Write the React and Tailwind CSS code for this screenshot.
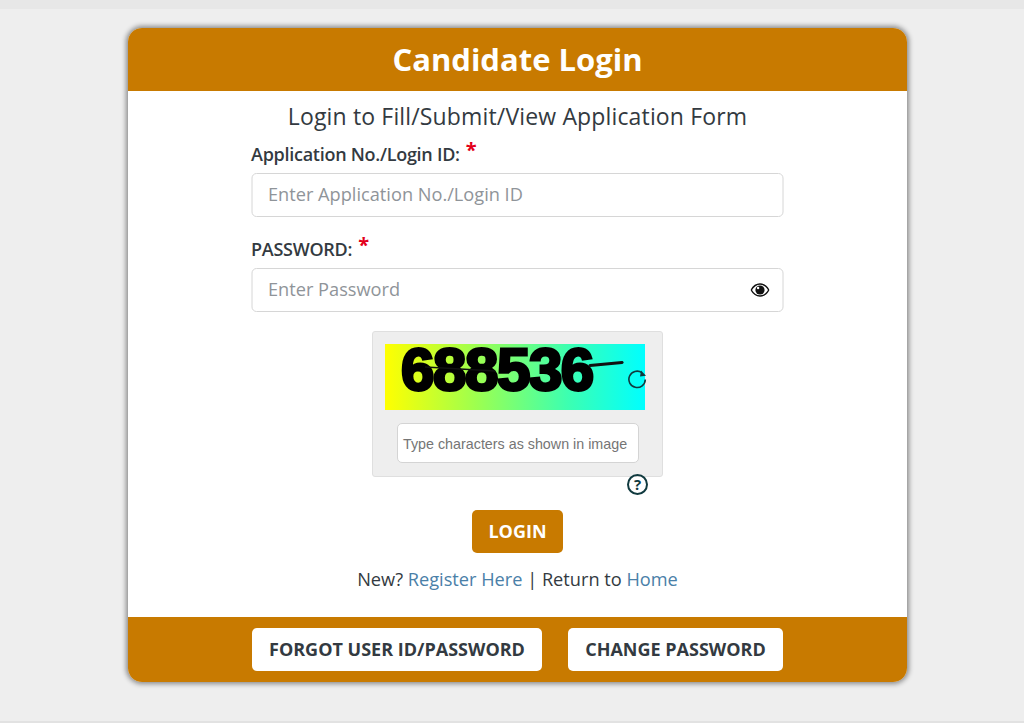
import React from 'react';

const Label = ({ children, className }) => (
  <label className={`flex items-start h-[24px] text-[18px] leading-[24px] font-semibold tracking-[-0.27px] text-[#333a41] ${className}`}>
    {children}
    <span className="ml-[6px] -mt-[4px] text-[20px] font-bold text-[#e3001b]">*</span>
  </label>
);

const Eye = () => (
  <svg width="19" height="14" viewBox="0 0 19 14" className="shrink-0">
    <path d="M0.7 7C3 3 6 1 9.5 1S16 3 18.3 7C16 11 13 13 9.5 13S3 11 0.7 7Z" fill="none" stroke="#111" strokeWidth="1.5" />
    <circle cx="9.5" cy="7" r="4.6" fill="#111" />
    <circle cx="7.6" cy="5" r="1.2" fill="#fff" />
  </svg>
);

const Refresh = () => (
  <svg width="20" height="20" viewBox="0 0 20 20" className="absolute left-[254px] top-[37px]">
    <path d="M18.3 10.5A8.2 8.2 0 1 1 14.8 3.6" fill="none" stroke="#103a3f" strokeWidth="1.6" />
    <path d="M14 1.5L19 6.8L13 7.5Z" fill="#103a3f" />
  </svg>
);

const App = () => {
  return (
    <div className="h-[723px] bg-[#eeeeee] overflow-hidden flex flex-col font-['Open_Sans',sans-serif]">
      <div className="h-[9px] bg-[#e7e7e7]" />
      <div className="mt-[19px] ml-[128px] w-[779px] h-[654px] rounded-[14px] bg-white flex flex-col overflow-hidden shadow-[0_0_5px_2px_rgba(0,0,0,0.42)]">
        <div className="h-[63px] shrink-0 bg-[#c87a00] flex items-center justify-center">
          <h1 className="text-[31px] leading-[63px] font-bold text-white">Candidate Login</h1>
        </div>

        <div className="flex-1 flex flex-col items-center">
          <h2 className="mt-[10px] h-[30px] text-[23px] leading-[30px] text-[#333a41] tracking-[0.15px] whitespace-nowrap">
            Login to Fill/Submit/View Application Form
          </h2>

          <div className="w-[532px] mt-[11px] -translate-x-[0.5px]">
            <Label>Application No./Login ID:</Label>
            <div className="mt-[7px] h-[44px] rounded-[5px] border border-[#d6d6d6] bg-white px-[16px] flex items-center text-[18.2px] text-[#8f9499]">
              Enter Application No./Login ID
            </div>
            <Label className="mt-[20px]">PASSWORD:</Label>
            <div className="mt-[7px] h-[44px] rounded-[5px] border border-[#d6d6d6] bg-white pl-[16px] pr-[13px] flex items-center justify-between text-[18.2px] text-[#8f9499]">
              <span>Enter Password</span>
              <Eye />
            </div>
          </div>

          <div className="relative mt-[19px] w-[291px] h-[146px] rounded-[3px] border border-[#dfdfdf] bg-[#eeeeee] pt-[12px]">
            <div className="relative ml-[12px] w-[260px] h-[66px] bg-[linear-gradient(to_right,#ffff00,#9dff4f_35%,#3dffb0_70%,#00ffff)]">
              <span className="block pl-[16px] h-[52px] text-[60px] leading-[52px] font-bold font-['Liberation_Sans',sans-serif] tracking-[-1.4px] text-black [-webkit-text-stroke:3px_#000]">
                688536
              </span>
              <svg width="260" height="66" viewBox="0 0 260 66" className="absolute inset-0">
                <path d="M40 23L110 27" stroke="#111" strokeWidth="1.5" fill="none" />
                <path d="M205 21.5L237 18.5" stroke="#111" strokeWidth="3" strokeLinecap="round" fill="none" />
              </svg>
            </div>
            <Refresh />
            <div className="mt-[13px] ml-[24px] w-[242px] h-[40px] rounded-[5px] border border-[#d4d4d4] bg-white pl-[5px] pt-[3px] flex items-center font-['Liberation_Sans',sans-serif] text-[14.3px] text-[#757575] whitespace-nowrap">
              Type characters as shown in image
            </div>
            <div className="absolute left-[254px] top-[142px] w-[21px] h-[21px] rounded-full border-2 border-[#103a3f] flex items-center justify-center text-[15px] leading-none font-bold text-[#103a3f]">
              ?
            </div>
          </div>

          <button className="mt-[33px] w-[91px] h-[43px] rounded-[5px] bg-[#c87a00] text-[18px] font-bold text-white">
            LOGIN
          </button>

          <p className="mt-[13px] text-[18.2px] leading-[26px] text-[#333a41]">
            New? <a className="text-[#4a80a8]">Register Here</a> | Return to <a className="text-[#4a80a8]">Home</a>
          </p>
        </div>

        <div className="h-[65px] shrink-0 bg-[#c87a00] flex items-start justify-center gap-[26px] pt-[11px]">
          <button className="w-[290px] h-[43px] rounded-[5px] bg-white text-[18px] font-bold text-[#333a41]">
            FORGOT USER ID/PASSWORD
          </button>
          <button className="w-[215px] h-[43px] rounded-[5px] bg-white text-[18px] font-bold text-[#333a41]">
            CHANGE PASSWORD
          </button>
        </div>
      </div>
      <div className="mt-auto h-[2px] bg-[#e2e2e2]" />
    </div>
  );
};

export default App;
